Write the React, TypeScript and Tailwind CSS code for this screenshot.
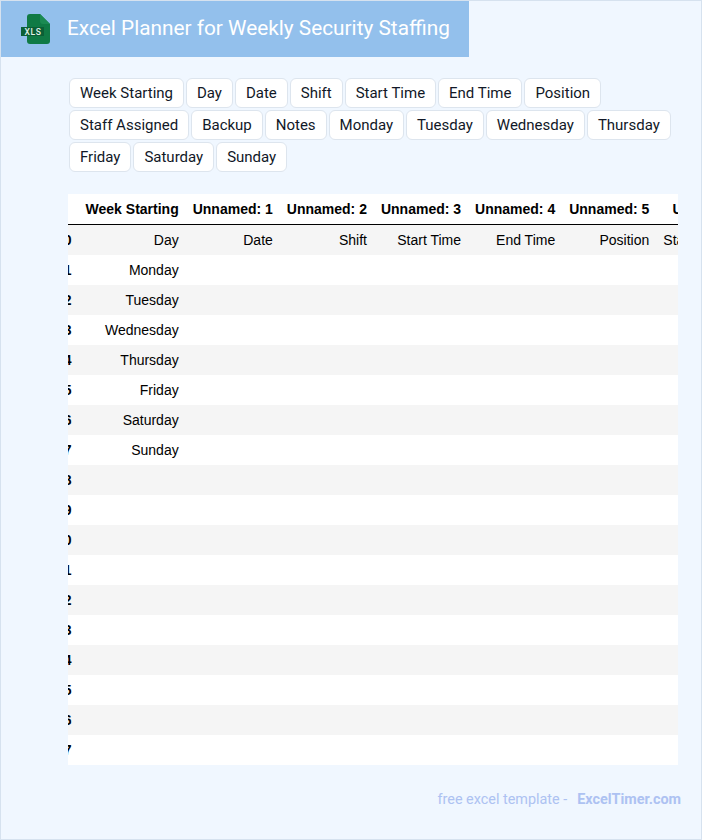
const TAGS = [
  'Week Starting', 'Day', 'Date', 'Shift', 'Start Time', 'End Time', 'Position',
  'Staff Assigned', 'Backup', 'Notes', 'Monday', 'Tuesday', 'Wednesday', 'Thursday',
  'Friday', 'Saturday', 'Sunday',
];

const HEADERS = [
  '', 'Week Starting', 'Unnamed: 1', 'Unnamed: 2', 'Unnamed: 3', 'Unnamed: 4', 'Unnamed: 5', 'Unnamed: 6',
];

const FIRST_ROW = ['Day', 'Date', 'Shift', 'Start Time', 'End Time', 'Position', 'Staff Assigned'];
const DAYS = ['Monday', 'Tuesday', 'Wednesday', 'Thursday', 'Friday', 'Saturday', 'Sunday'];

const ROWS = Array.from({ length: 18 }, (_, i) => {
  if (i === 0) return FIRST_ROW;
  return [DAYS[i - 1] ?? '', '', '', '', '', '', ''];
});

function XlsIcon() {
  return (
    <svg width="30" height="30" viewBox="0 0 30 30" className="mt-[-1px] shrink-0">
      <path d="M9 0h10l10 10v17a3 3 0 0 1-3 3H9a3 3 0 0 1-3-3V3a3 3 0 0 1 3-3z" fill="#107a45" />
      <path d="M19 0l10 10h-7a3 3 0 0 1-3-3z" fill="#1b8a52" />
      <rect x="0" y="13" width="23" height="9" fill="#0b5f36" />
      <text x="12" y="20.8" textAnchor="middle" fontSize="8.5" fontWeight="500" letterSpacing="0.6" fill="#e3f2e9" fontFamily="Roboto, sans-serif">XLS</text>
    </svg>
  );
}

export default function App() {
  return (
    <div className="h-[840px] w-[702px] border border-[#d6e2ef] bg-[#f0f7ff] font-['Roboto',sans-serif]">
      <div className="flex h-[56px] w-[468px] items-center gap-[16px] bg-[#93c0ec] pl-[20px]">
        <XlsIcon />
        <h1 className="mt-[-1px] whitespace-nowrap text-[20.8px] font-normal text-white">
          Excel Planner for Weekly Security Staffing
        </h1>
      </div>

      <div className="mt-[21px] flex flex-wrap gap-x-[1.96px] gap-y-[2px] pl-[68px] pr-[24px]">
        {TAGS.map((tag) => (
          <span
            key={tag}
            className="flex h-[30px] items-center rounded-[6px] border border-[#dde5ee] bg-white px-[10px] text-[15px] text-[#111827]"
          >
            {tag}
          </span>
        ))}
      </div>

      <div className="ml-[67px] mt-[22px] w-[610px] overflow-hidden bg-white">
        <table className="ml-[-19px] border-separate border-spacing-0 whitespace-nowrap font-['Liberation_Sans',Arial,sans-serif] text-[14px] text-black">
          <thead>
            <tr className="h-[31px]">
              {HEADERS.map((h, i) => (
                <th key={i} className={`border-b border-black px-[7px] text-right font-bold ${i === 0 ? 'w-[30px]' : ''} ${i > 1 ? 'min-w-[94px]' : ''}`}>
                  {h}
                </th>
              ))}
            </tr>
          </thead>
          <tbody>
            {ROWS.map((row, i) => (
              <tr key={i} className={`h-[30px] ${i % 2 === 0 ? 'bg-[#f5f5f5]' : 'bg-white'}`}>
                <td className="px-[7px] text-right font-bold">{i}</td>
                {row.map((cell, j) => (
                  <td key={j} className="px-[7px] text-right">{cell}</td>
                ))}
              </tr>
            ))}
          </tbody>
        </table>
      </div>

      <div className="mr-[20px] mt-[24px] flex justify-end gap-[10px] text-[14.4px] text-[#adc2f2]">
        <span>free excel template -</span>
        <span className="font-bold">ExcelTimer.com</span>
      </div>
    </div>
  );
}
